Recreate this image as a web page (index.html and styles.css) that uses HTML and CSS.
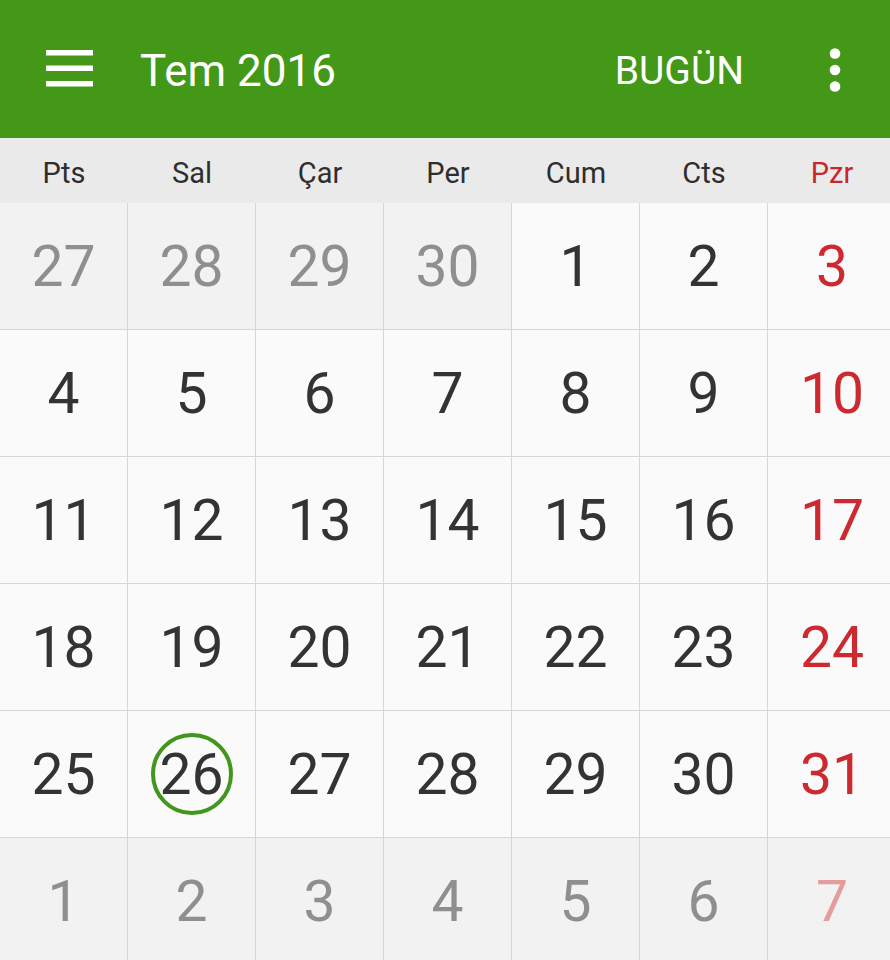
FILE: index.html
```html
<!DOCTYPE html>
<html lang="tr">
<head>
  <meta charset="UTF-8" />
  <meta name="viewport" content="width=device-width, initial-scale=1.0" />
  <title>Takvim</title>
  <link rel="stylesheet" href="styles.css">
</head>
<body>

  <!-- Top bar -->
  <header class="appbar">
    <svg class="menu-icon" width="47" height="38" viewBox="0 0 47 38">
      <rect x="0" y="0" width="47" height="5.5" fill="#fff" />
      <rect x="0" y="15.5" width="47" height="5.5" fill="#fff" />
      <rect x="0" y="31" width="47" height="5.5" fill="#fff" />
    </svg>
    <div class="title">Tem 2016</div>
    <div class="today-btn">BUGÜN</div>
    <svg class="more-icon" width="12" height="44" viewBox="0 0 12 44">
      <circle cx="6" cy="5.5" r="5.3" fill="#fff" />
      <circle cx="6" cy="22" r="5.3" fill="#fff" />
      <circle cx="6" cy="38.5" r="5.3" fill="#fff" />
    </svg>
  </header>

  <!-- Weekday names -->
  <div class="weekdays">
    <span>Pts</span>
    <span>Sal</span>
    <span>Çar</span>
    <span>Per</span>
    <span>Cum</span>
    <span>Cts</span>
    <span class="sun">Pzr</span>
  </div>

  <!-- Month grid -->
  <div class="month">
    <div class="cell other">27</div>
    <div class="cell other">28</div>
    <div class="cell other">29</div>
    <div class="cell other">30</div>
    <div class="cell">1</div>
    <div class="cell">2</div>
    <div class="cell sun">3</div>

    <div class="cell">4</div>
    <div class="cell">5</div>
    <div class="cell">6</div>
    <div class="cell">7</div>
    <div class="cell">8</div>
    <div class="cell">9</div>
    <div class="cell sun">10</div>

    <div class="cell">11</div>
    <div class="cell">12</div>
    <div class="cell">13</div>
    <div class="cell">14</div>
    <div class="cell">15</div>
    <div class="cell">16</div>
    <div class="cell sun">17</div>

    <div class="cell">18</div>
    <div class="cell">19</div>
    <div class="cell">20</div>
    <div class="cell">21</div>
    <div class="cell">22</div>
    <div class="cell">23</div>
    <div class="cell sun">24</div>

    <div class="cell">25</div>
    <div class="cell"><span class="today">26</span></div>
    <div class="cell">27</div>
    <div class="cell">28</div>
    <div class="cell">29</div>
    <div class="cell">30</div>
    <div class="cell sun">31</div>

    <div class="cell other">1</div>
    <div class="cell other">2</div>
    <div class="cell other">3</div>
    <div class="cell other">4</div>
    <div class="cell other">5</div>
    <div class="cell other">6</div>
    <div class="cell other sun">7</div>
  </div>

</body>
</html>
```

FILE: styles.css
```css
* {
  box-sizing: border-box;
}

html,
body {
  margin: 0;
  padding: 0;
  height: 960px;
  overflow: hidden;
}

body {
  font-family: Roboto, "Noto Sans", sans-serif;
  background-color: #fafafa;
  color: #333;
}

.appbar {
  display: flex;
  align-items: center;
  height: 138px;
  padding: 0 49px 0 46px;
  background-color: #439817;
  color: #fff;
}

.menu-icon {
  display: block;
  margin-top: -1px;
}

.title {
  margin-left: 47px;
  font-size: 44px;
  flex: 1;
  padding-top: 3px;
}

.today-btn {
  font-size: 39px;
  margin-right: 85px;
  padding-top: 3px;
}

.more-icon {
  display: block;
  margin-top: 2px;
}

.weekdays {
  display: grid;
  grid-template-columns: repeat(7, 128px);
  height: 65px;
  background-color: #eaeaea;
  align-items: center;
  text-align: center;
  font-size: 29px;
  color: #2e2e2e;
}

.weekdays span {
  padding-top: 4px;
}

.weekdays .sun {
  color: #c9262d;
}

.month {
  display: grid;
  grid-template-columns: repeat(7, 128px);
  grid-auto-rows: 127px;
}

.cell {
  display: flex;
  align-items: center;
  justify-content: center;
  border-right: 1px solid #d6d6d6;
  border-bottom: 1px solid #d6d6d6;
  background-color: #fafafa;
  font-size: 57px;
  color: #333;
}

.cell:nth-child(7n) {
  border-right: none;
}

.cell.sun {
  color: #cc2a30;
}

.cell.other {
  background-color: #f2f2f2;
  color: #8f8f8f;
}

.cell.other.sun {
  color: #e59c9c;
}

.today {
  display: flex;
  align-items: center;
  justify-content: center;
  width: 82px;
  height: 82px;
  border: 4px solid #42961c;
  border-radius: 50%;
}
```
